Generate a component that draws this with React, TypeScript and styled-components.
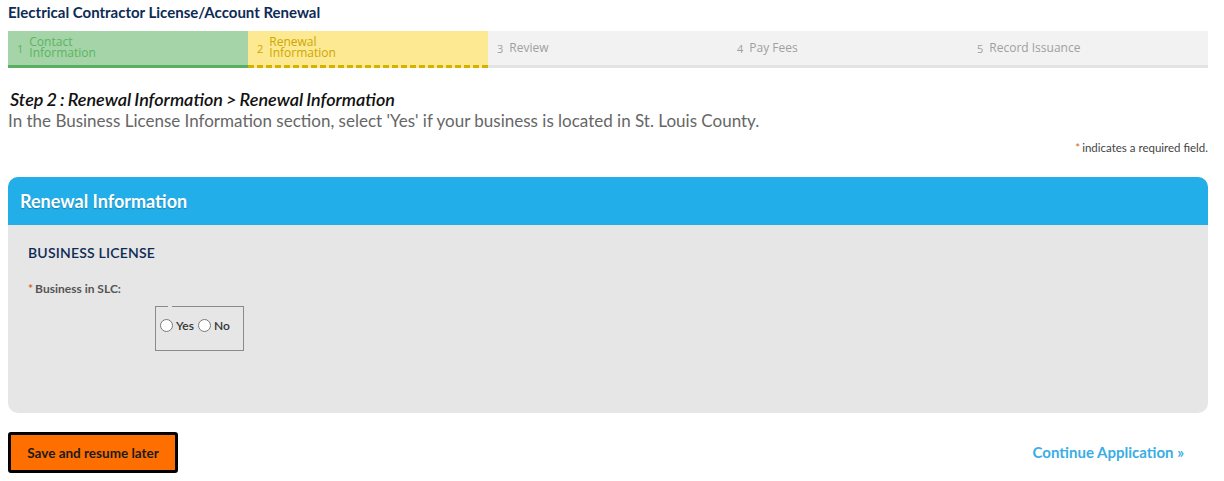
import styled, { createGlobalStyle } from 'styled-components'

const GlobalStyle = createGlobalStyle`
  body {
    margin: 0;
    font-family: Lato, "Open Sans", "Liberation Sans", sans-serif;
    background: #fff;
  }
`

const Page = styled.div`
  padding: 3px 16px 0 8px;
  width: 1200px;
`

const Title = styled.h1`
  margin: 0;
  font-size: 15px;
  font-weight: 700;
  line-height: 18px;
  color: #0d2b55;
`

const StepBar = styled.ol`
  list-style: none;
  margin: 10px 0 0;
  padding: 0;
  display: grid;
  grid-template-columns: repeat(5, 240px);
`

type StepState = 'done' | 'current' | 'todo'

const stepColors: Record<StepState, { bg: string; text: string; border: string }> = {
  done: { bg: '#a4d4a7', text: '#5cb562', border: '3px solid #5aae5f' },
  current: { bg: '#fde992', text: '#cda700', border: '3px dashed #d3b300' },
  todo: { bg: '#f2f2f2', text: '#a0a0a0', border: '3px solid #e3e3e3' },
}

const Step = styled.li<{ $state: StepState }>`
  height: 34px;
  display: flex;
  align-items: center;
  gap: 6px;
  padding-left: 9px;
  background: ${({ $state }) => stepColors[$state].bg};
  border-bottom: ${({ $state }) => stepColors[$state].border};
  color: ${({ $state }) => stepColors[$state].text};
  font-family: "Liberation Sans Narrow", "Open Sans", sans-serif;
  font-size: 12px;
  line-height: 11px;
`

const StepNum = styled.span`
  font-size: 11px;
`

const StepLabel = styled.span`
  white-space: pre-line;
  transform: translateY(-1px);
`

const StepHeading = styled.h2`
  margin: 21px 0 0 2px;
  font-size: 18px;
  font-style: italic;
  font-weight: 600;
  color: #111;
  line-height: 20px;
  word-spacing: -1px;
`

const Instructions = styled.p`
  margin: 2px 0 0;
  font-size: 17px;
  color: #666;
  line-height: 20px;
`

const RequiredNote = styled.div`
  margin-top: 10px;
  text-align: right;
  font-size: 11.5px;
  color: #444;
  line-height: 14px;
`

const Star = styled.span`
  color: #d2691e;
  margin-right: 2px;
`

const Panel = styled.section`
  margin-top: 22px;
  border-radius: 10px;
  overflow: hidden;
  background: #e6e6e6;
  height: 236px;
`

const PanelHeader = styled.div`
  height: 48px;
  background: #22aee9;
  display: flex;
  align-items: center;
  padding-left: 12px;
  color: #fff;
  font-size: 18px;
  font-weight: 700;
  text-shadow: 0 1px 1px rgba(0, 0, 0, 0.25);
`

const PanelBody = styled.div`
  padding: 19px 20px;
`

const SectionTitle = styled.h3`
  margin: 0;
  font-size: 14px;
  font-weight: 600;
  color: #0d2b55;
  letter-spacing: 0.2px;
  line-height: 18px;
`

const FieldLabel = styled.div`
  margin-top: 20px;
  font-size: 12px;
  font-weight: 700;
  color: #555;
  line-height: 14px;
`

const RadioBox = styled.fieldset`
  margin: 10px 0 0 127px;
  width: 89px;
  height: 45px;
  box-sizing: border-box;
  border: 1px solid #8a8a8a;
  padding: 0 0 7px 4px;
  display: flex;
  align-items: center;
  gap: 4px;
`

const Legend = styled.legend`
  padding: 0;
  margin-left: 8px;
  width: 4px;
  height: 1px;
`

const RadioOption = styled.label`
  display: flex;
  align-items: center;
  gap: 3px;
  font-size: 12px;
  font-weight: 600;
  color: #333;
`

const Radio = styled.input`
  margin: 0;
  width: 13px;
  height: 13px;
`

const Footer = styled.div`
  margin-top: 19px;
  display: flex;
  justify-content: space-between;
  align-items: center;
`

const SaveButton = styled.button`
  width: 170px;
  height: 41px;
  background: #ff6f00;
  border: 3px solid #000;
  border-radius: 3px;
  font-family: Lato, "Open Sans", sans-serif;
  font-size: 13.5px;
  font-weight: 700;
  color: #1b1b1b;
  cursor: pointer;
`

const ContinueLink = styled.a`
  margin: 0 24px 2px 0;
  font-size: 15px;
  font-weight: 700;
  color: #3aade4;
  text-decoration: none;
`

const steps: { num: number; label: string; state: StepState }[] = [
  { num: 1, label: 'Contact\nInformation', state: 'done' },
  { num: 2, label: 'Renewal\nInformation', state: 'current' },
  { num: 3, label: 'Review', state: 'todo' },
  { num: 4, label: 'Pay Fees', state: 'todo' },
  { num: 5, label: 'Record Issuance', state: 'todo' },
]

export default function App(): JSX.Element {
  return (
    <>
      <GlobalStyle />
      <Page>
        <Title>Electrical Contractor License/Account Renewal</Title>
        <StepBar>
          {steps.map((s) => (
            <Step key={s.num} $state={s.state}>
              <StepNum>{s.num}</StepNum>
              <StepLabel>{s.label}</StepLabel>
            </Step>
          ))}
        </StepBar>
        <StepHeading>Step 2 : Renewal Information &gt; Renewal Information</StepHeading>
        <Instructions>
          In the Business License Information section, select 'Yes' if your business is located in St. Louis County.
        </Instructions>
        <RequiredNote>
          <Star>*</Star>indicates a required field.
        </RequiredNote>
        <Panel>
          <PanelHeader>Renewal Information</PanelHeader>
          <PanelBody>
            <SectionTitle>BUSINESS LICENSE</SectionTitle>
            <FieldLabel>
              <Star>*</Star>Business in SLC:
            </FieldLabel>
            <RadioBox>
              <Legend />
              <RadioOption>
                <Radio type="radio" name="slc" /> Yes
              </RadioOption>
              <RadioOption>
                <Radio type="radio" name="slc" /> No
              </RadioOption>
            </RadioBox>
          </PanelBody>
        </Panel>
        <Footer>
          <SaveButton>Save and resume later</SaveButton>
          <ContinueLink href="#">Continue Application »</ContinueLink>
        </Footer>
      </Page>
    </>
  )
}
